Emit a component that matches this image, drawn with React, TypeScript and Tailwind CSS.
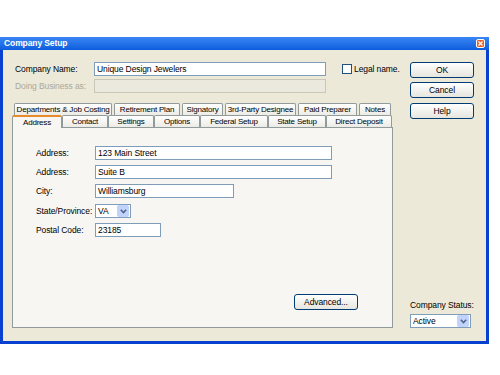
import React from 'react';

const row1 = [
  { label: 'Departments & Job Costing', w: 98 },
  { label: 'Retirement Plan', w: 66 },
  { label: 'Signatory', w: 41 },
  { label: '3rd-Party Designee', w: 71 },
  { label: 'Paid Preparer', w: 59 },
  { label: 'Notes', w: 32 },
];

const row2 = [
  { label: 'Address', w: 50 },
  { label: 'Contact', w: 46 },
  { label: 'Settings', w: 46 },
  { label: 'Options', w: 46 },
  { label: 'Federal Setup', w: 68 },
  { label: 'State Setup', w: 58 },
  { label: 'Direct Deposit', w: 66 },
];

const XpButton: React.FC<{ label: string; className?: string }> = ({ label, className = '' }) => (
  <button
    className={`h-[16px] rounded-[3px] border border-[#003c74] bg-gradient-to-b from-white to-[#e6e5de] text-[8.5px] leading-none text-black ${className}`}
  >
    {label}
  </button>
);

const Field: React.FC<{ label: string; value: string; w: number }> = ({ label, value, w }) => (
  <div className="flex h-[14px] items-center">
    <div className="w-[59px] shrink-0 whitespace-nowrap">{label}</div>
    <div
      className="flex h-[14px] items-center border border-[#7f9db9] bg-white pl-[2px]"
      style={{ width: w }}
    >
      {value}
    </div>
  </div>
);

const DropArrow: React.FC = () => (
  <div className="flex h-[12px] w-[12px] items-center justify-center rounded-[2px] bg-[#c1d3fb]">
    <svg width="7" height="5" viewBox="0 0 7 5">
      <path d="M0.8 0.8 L3.5 3.6 L6.2 0.8" stroke="#4d6185" strokeWidth="1.5" fill="none" />
    </svg>
  </div>
);

const App: React.FC = () => {
  return (
    <div className="h-[375px] w-[500px] bg-white pt-[37px] font-['Liberation_Sans',Arial,sans-serif] text-[8.5px] tracking-[-0.1px] text-black">
      <div className="flex h-[307px] w-[489px] flex-col border-x-[3px] border-b-[3px] border-[#0841d0] bg-[#ece9d8]">
        {/* Title bar */}
        <div className="-mx-[3px] flex h-[13px] items-center justify-between bg-gradient-to-b from-[#3a86f5] to-[#0b5ddc] pl-[4px] pr-[4px]">
          <span className="text-[8.5px] font-bold text-white">Company Setup</span>
          <div className="flex h-[9px] w-[9px] items-center justify-center rounded-[2px] border border-white bg-[#e2632f]">
            <svg width="5" height="5" viewBox="0 0 5 5">
              <path d="M0.5 0.5 L4.5 4.5 M4.5 0.5 L0.5 4.5" stroke="white" strokeWidth="1.2" />
            </svg>
          </div>
        </div>

        <div className="flex flex-1">
          {/* Left column */}
          <div className="flex w-[402px] flex-col pl-[9px] pt-[12px] pb-[13px]">
            <div className="flex h-[14px] items-center pl-[3px]">
              <div className="w-[79px] whitespace-nowrap">Company Name:</div>
              <div className="flex h-[14px] w-[232px] items-center border border-[#7f9db9] bg-white pl-[2px]">
                Unique Design Jewelers
              </div>
              <div className="ml-[16px] h-[10px] w-[10px] border border-[#1c5180] bg-white" />
              <span className="ml-[2px] whitespace-nowrap">Legal name.</span>
            </div>
            <div className="mt-[3px] flex h-[14px] items-center pl-[3px]">
              <div className="w-[79px] whitespace-nowrap text-[#aca899]">Doing Business as:</div>
              <div className="h-[14px] w-[232px] border border-[#c9c7ba] bg-[#ebe9de]" />
            </div>

            {/* Tabs */}
            <div className="mt-[10px] flex h-[12px] gap-[2px] pl-[2px] text-[8px] tracking-[-0.2px]">
              {row1.map((t) => (
                <div
                  key={t.label}
                  className="flex h-[12px] items-center justify-center whitespace-nowrap rounded-t-[2px] border border-b-0 border-[#919b9c] bg-gradient-to-b from-white to-[#ecebe5]"
                  style={{ width: t.w }}
                >
                  {t.label}
                </div>
              ))}
            </div>
            <div className="flex h-[12px] text-[8px] tracking-[-0.2px]">
              {row2.map((t, i) => (
                <div
                  key={t.label}
                  className={
                    i === 0
                      ? 'relative z-10 -mb-[1px] flex h-[13px] items-center justify-center whitespace-nowrap rounded-t-[2px] border-x border-t-[2px] border-x-[#919b9c] border-t-[#e68b2c] bg-[#f7f6f2]'
                      : 'flex h-[12px] items-center justify-center whitespace-nowrap rounded-t-[2px] border border-b-0 border-[#919b9c] bg-gradient-to-b from-white to-[#ecebe5]'
                  }
                  style={{ width: t.w }}
                >
                  {t.label}
                </div>
              ))}
            </div>

            {/* Panel */}
            <div className="flex w-[381px] flex-1 flex-col border border-[#919b9c] bg-[#f7f6f2] pl-[23px] pt-[18px] pb-[17px]">
              <div className="flex flex-col gap-[5px]">
                <Field label="Address:" value="123 Main Street" w={237} />
                <Field label="Address:" value="Suite B" w={237} />
                <Field label="City:" value="Williamsburg" w={139} />
                <div className="mt-[1px] flex h-[14px] items-center">
                  <div className="w-[59px] shrink-0 whitespace-nowrap">State/Province:</div>
                  <div className="flex h-[14px] w-[36px] items-center justify-between border border-[#7f9db9] bg-white pl-[2px] pr-[1px]">
                    VA
                    <DropArrow />
                  </div>
                </div>
                <Field label="Postal Code:" value="23185" w={66} />
              </div>
              <div className="mt-auto flex justify-end pr-[34px]">
                <XpButton label="Advanced..." className="w-[64px]" />
              </div>
            </div>
          </div>

          {/* Right column */}
          <div className="flex flex-col pt-[12px] pb-[13px] pl-[5px]">
            <XpButton label="OK" className="w-[64px]" />
            <XpButton label="Cancel" className="mt-[4px] w-[64px]" />
            <XpButton label="Help" className="mt-[5px] w-[64px]" />
            <div className="mt-auto">
              <div className="mb-[2px] whitespace-nowrap">Company Status:</div>
              <div className="flex h-[14px] w-[61px] items-center justify-between border border-[#7f9db9] bg-white pl-[2px] pr-[1px]">
                Active
                <DropArrow />
              </div>
            </div>
          </div>
        </div>
      </div>
    </div>
  );
};

export default App;
